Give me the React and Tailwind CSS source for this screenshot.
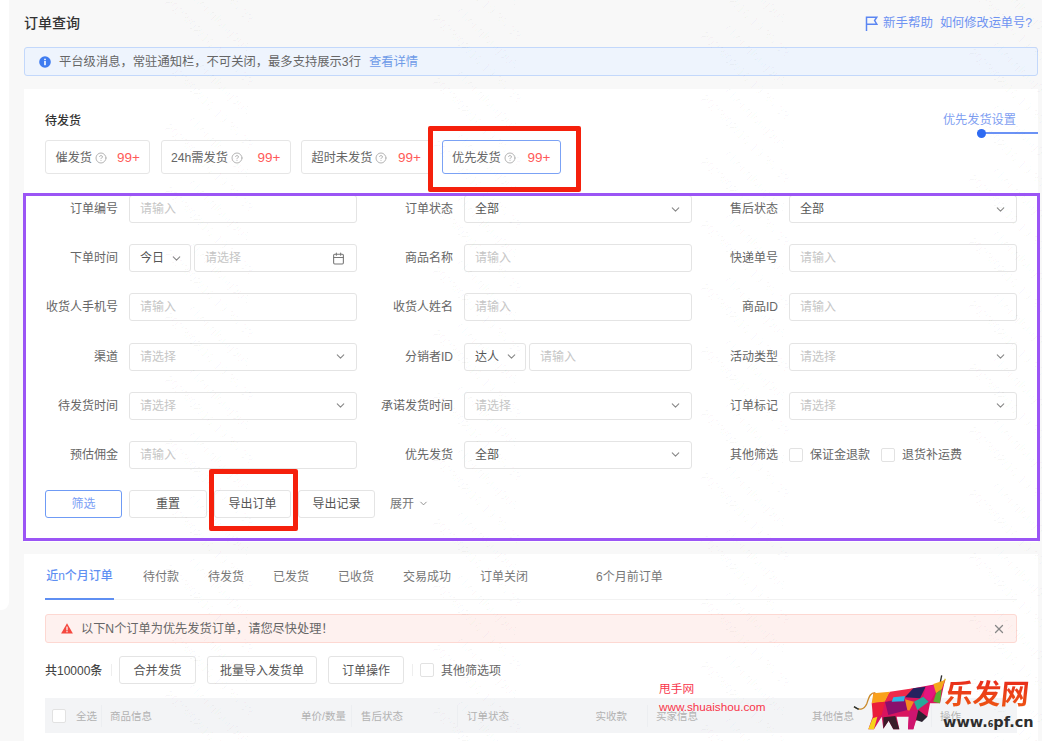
import React from 'react';
import { ChevronDown, CircleHelp, Calendar, X } from 'lucide-react';

const statusTabs = [
  { label: '催发货', width: 'w-[105px]' },
  { label: '24h需发货', width: 'w-[130px]' },
  { label: '超时未发货', width: 'w-[130px]' },
  { label: '优先发货', width: 'w-[119px]', active: true },
];

const orderTabs = ['待付款', '待发货', '已发货', '已收货', '交易成功', '订单关闭'];

const Input = ({ text = '请输入' }) => (
  <div className="flex h-[28px] w-full items-center rounded-[3px] border border-[#e4e4e4] bg-white px-[10px] text-[#c6c6c6]">
    {text}
  </div>
);

const Select = ({ text = '请选择', filled }) => (
  <div className={`flex h-[28px] w-full items-center justify-between rounded-[3px] border border-[#e4e4e4] bg-white pl-[10px] pr-[9px] ${filled ? 'text-[#555]' : 'text-[#c6c6c6]'}`}>
    <span>{text}</span>
    <ChevronDown size={13} className="text-[#888]" />
  </div>
);

const Small = ({ text }) => (
  <div className="flex h-[28px] w-[62px] shrink-0 items-center justify-between rounded-[3px] border border-[#e4e4e4] bg-white pl-[10px] pr-[7px] text-[#555]">
    <span>{text}</span>
    <ChevronDown size={13} className="text-[#888]" />
  </div>
);

const Field = ({ label, children }) => (
  <div className="flex items-center">
    <div className="w-[73px] shrink-0 whitespace-nowrap text-right text-[#666]">{label}</div>
    <div className="ml-[11px] flex w-[228px] gap-[3px]">{children}</div>
  </div>
);

const Button = ({ children, width, primary }) => (
  <div className={`flex h-[28px] ${width} items-center justify-center rounded-[3px] border pt-[1px] ${primary ? 'border-[#6f9bf5] text-[#7ba0f5]' : 'border-[#e4e4e4] text-[#555]'} bg-white`}>
    {children}
  </div>
);

const Check = () => <div className="h-[14px] w-[14px] shrink-0 rounded-[2px] border border-[#e2e2e2] bg-white" />;

const Cell = ({ width, children, className = '' }) => (
  <div className={`flex h-[22px] shrink-0 items-center border-r border-[#eceef1] ${width} ${className}`}>{children}</div>
);

const Flag = () => (
  <svg width="13" height="15" viewBox="0 0 13 15" fill="none" stroke="#5b86f2" strokeWidth="1.5">
    <path d="M1.5 15V1.2h10.3L9.6 4.6l2.2 3.6H1.5" />
  </svg>
);

const Info = () => (
  <svg width="12" height="12" viewBox="0 0 12 12">
    <circle cx="6" cy="6" r="5.8" fill="#3f7cf0" />
    <rect x="5.2" y="5" width="1.6" height="4.2" fill="#fff" />
    <rect x="5.2" y="2.7" width="1.6" height="1.5" fill="#fff" />
  </svg>
);

const Warn = () => (
  <svg width="12" height="11" viewBox="0 0 12 11">
    <path d="M6 .3 11.9 10.6H.1z" fill="#f5483f" />
    <rect x="5.4" y="3.6" width="1.2" height="3.8" fill="#fff" />
    <rect x="5.4" y="8.1" width="1.2" height="1.2" fill="#fff" />
  </svg>
);

// bull logo, coordinates follow the picture at 3x
const bull = [
  ['130,100 200,98 250,85 320,72 345,60 330,130 300,130 292,170 258,182 250,208 234,208 236,170 200,170 208,208 190,208 176,182 160,206 155,170 132,208 115,208 128,170', '#d9145f'],
  ['130,100 180,95 165,125 125,130', '#f9a11b'],
  ['125,130 165,125 155,165 130,178', '#ea1d3a'],
  ['128,175 142,170 132,208 115,208', '#f7d21a'],
  ['165,125 225,118 232,150 175,165', '#8a0f6c'],
  ['180,95 250,85 225,112 165,125', '#ee2a4a'],
  ['250,85 287,80 270,115 225,112', '#25225f'],
  ['190,112 225,108 222,124 185,125', '#2fb5e5'],
  ['225,118 252,125 238,152 232,150', '#f58a1f'],
  ['252,125 280,110 296,125 262,150', '#2aa89a'],
  ['287,80 320,75 315,100 300,125 280,110', '#e5167f'],
  ['310,72 345,60 335,88 318,100', '#f4a81c'],
  ['318,100 335,88 330,130 310,125', '#5bb031'],
  ['160,172 196,168 208,208 190,208 176,182 160,206', '#3a1c2a'],
  ['238,152 265,150 256,180 250,208 234,208', '#cf1570'],
  ['265,150 292,170 276,186 258,180', '#2b2230'],
];

const App = () => {
  const marks = [];
  for (let c = 0; c < 6; c++) {
    for (let r = -1; r < 13; r++) {
      marks.push({ left: c * 268 - 111, top: r * 63 - 5 + (c * 17) % 63 });
    }
  }

  return (
    <div className="relative flex h-[741px] w-[1042px] overflow-hidden bg-[#f8f8f8] text-[12px] leading-[20px] text-[#555] [font-family:'Liberation_Sans','Noto_Sans_CJK_SC',sans-serif]">
      <div className="h-[610px] w-[9px] shrink-0 rounded-br-lg bg-white" />

      <div className="ml-[15px] flex w-[1014px] shrink-0 flex-col">
        {/* Header */}
        <div className="flex h-[47px] shrink-0 items-center justify-between pb-[1px]">
          <h1 className="text-[14px] font-medium text-[#333]">订单查询</h1>
          <div className="-mr-[-6px] flex items-center text-[#6e93f2]">
            <Flag />
            <span className="ml-[5px] text-[12.5px]">新手帮助</span>
            <span className="ml-[7px] text-[12.2px]">如何修改运单号?</span>
          </div>
        </div>

        {/* Notice */}
        <div className="flex h-[29px] shrink-0 items-center rounded-[3px] border border-[#c3d8fb] bg-[#eef4fd] pl-[14px] text-[12.3px]">
          <Info />
          <span className="ml-[8px] text-[#666]">平台级消息，常驻通知栏，不可关闭，最多支持展示3行</span>
          <span className="ml-[8px] text-[#6e9be8]">查看详情</span>
        </div>

        {/* Filter card */}
        <div className="relative mt-[13px] shrink-0 bg-white px-[21px] pb-[24px] pt-[22px]">
          <div className="font-medium text-[#333]">待发货</div>
          <div className="mt-[9px] flex gap-[10.5px]">
            {statusTabs.map((t) => (
              <div
                key={t.label}
                className={`flex h-[34px] ${t.width} items-center rounded-[3px] border bg-white pl-[9.5px] pr-[9px] pt-[1px] ${t.active ? 'border-[#7ba2f5]' : 'border-[#e6e6e6]'}`}
              >
                <span className="whitespace-nowrap text-[12.2px] text-[#666]">{t.label}</span>
                <CircleHelp size={12} className="ml-[3px] shrink-0 text-[#b4b4b4]" />
                <span className="ml-auto text-[13.5px] text-[#ff5a58]">99+</span>
              </div>
            ))}
          </div>

          <div className="mt-[21px] grid grid-cols-[335px_325px_312px] gap-y-[21.2px]">
            <Field label="订单编号"><Input /></Field>
            <Field label="订单状态"><Select text="全部" filled /></Field>
            <Field label="售后状态"><Select text="全部" filled /></Field>

            <Field label="下单时间">
              <Small text="今日" />
              <div className="flex h-[28px] flex-1 items-center justify-between rounded-[3px] border border-[#e4e4e4] pl-[10px] pr-[11px] text-[#c6c6c6]">
                <span>请选择</span>
                <Calendar size={13} className="text-[#777]" />
              </div>
            </Field>
            <Field label="商品名称"><Input /></Field>
            <Field label="快递单号"><Input /></Field>

            <Field label="收货人手机号"><Input /></Field>
            <Field label="收货人姓名"><Input /></Field>
            <Field label="商品ID"><Input /></Field>

            <Field label="渠道"><Select /></Field>
            <Field label="分销者ID">
              <Small text="达人" />
              <Input />
            </Field>
            <Field label="活动类型"><Select /></Field>

            <Field label="待发货时间"><Select /></Field>
            <Field label="承诺发货时间"><Select /></Field>
            <Field label="订单标记"><Select /></Field>

            <Field label="预估佣金"><Input /></Field>
            <Field label="优先发货"><Select text="全部" filled /></Field>
            <Field label="其他筛选">
              <div className="flex h-[28px] items-center whitespace-nowrap text-[#666]">
                <Check />
                <span className="ml-[7px]">保证金退款</span>
                <span className="ml-[11px]"><Check /></span>
                <span className="ml-[7px]">退货补运费</span>
              </div>
            </Field>
          </div>

          <div className="mt-[21px] flex items-center">
            <Button width="w-[77px]" primary>筛选</Button>
            <div className="ml-[7px]"><Button width="w-[78px]">重置</Button></div>
            <div className="ml-[7px]"><Button width="w-[77px]">导出订单</Button></div>
            <div className="ml-[7px]"><Button width="w-[77px]">导出记录</Button></div>
            <span className="ml-[15px] text-[#777]">展开</span>
            <ChevronDown size={11} className="ml-[4px] text-[#888]" />
          </div>

          {/* Priority setting tip */}
          <div className="absolute right-[22px] top-[21px] text-[12.2px] text-[#7f9ff2]">优先发货设置</div>
          <div className="absolute left-[953px] right-0 top-[43px] h-[2px] bg-[#6b92f5]" />
          <div className="absolute left-[953px] top-[40px] h-[9px] w-[9px] rounded-full bg-[#2f6bf2]" />
        </div>

        {/* Orders card */}
        <div className="mt-[12px] flex-1 bg-white px-[21px]">
          <div className="flex h-[46px] items-stretch gap-[29px] border-b border-[#f2f2f2]">
            <div className="-mb-px flex w-[69px] items-center justify-center border-b-2 border-[#5f8ff2] pt-[1px] font-medium text-[#5f8ff2]">近n个月订单</div>
            {orderTabs.map((t) => (
              <div key={t} className="flex items-center pt-[1px] text-[#777]">{t}</div>
            ))}
            <div className="ml-[39px] flex items-center pt-[1px] text-[#777]">6个月前订单</div>
          </div>

          <div className="mt-[14px] flex h-[29px] items-center rounded-[3px] border border-[#fdd8d2] bg-[#fef1ef] pl-[15px] pr-[10px] pt-[1px] text-[12.2px]">
            <Warn />
            <span className="ml-[8px] text-[#666]">以下N个订单为优先发货订单，请您尽快处理！</span>
            <X size={14} strokeWidth={2.2} className="ml-auto text-[#888]" />
          </div>

          <div className="mt-[14px] flex h-[27px] items-center">
            <span className="w-[58px] pt-[1px] font-medium text-[#444]">共10000条</span>
            <div className="ml-[8px] h-[12px] w-px bg-[#eee]" />
            <div className="ml-[7px]"><Button width="w-[77px]">合并发货</Button></div>
            <div className="ml-[11px]"><Button width="w-[110px]">批量导入发货单</Button></div>
            <div className="ml-[11px]"><Button width="w-[76px]">订单操作</Button></div>
            <div className="ml-[8px] h-[12px] w-px bg-[#eee]" />
            <div className="ml-[7px]"><Check /></div>
            <span className="ml-[7px] pt-[1px] text-[#666]">其他筛选项</span>
          </div>

          <div className="mt-[14px] flex h-[35px] items-center bg-[#f3f4f6] pt-[1px] text-[10.5px] text-[#b2b2b2]">
            <Cell width="w-[57px]" className="pl-[7px]">
              <Check />
              <span className="ml-[10px]">全选</span>
            </Cell>
            <Cell width="w-[250px]" className="justify-between pl-[8px] pr-[5px]">
              <span>商品信息</span>
              <span>单价/数量</span>
            </Cell>
            <Cell width="w-[106px]" className="pl-[9px]">售后状态</Cell>
            <Cell width="w-[190px]" className="justify-between pl-[9px] pr-[20px]">
              <span>订单状态</span>
              <span>实收款</span>
            </Cell>
            <Cell width="w-[156px]" className="border-r-0 pl-[8px]">买家信息</Cell>
            <Cell width="w-[128px]" className="pl-[8px]">其他信息</Cell>
            <div className="pl-[8px]">操作</div>
          </div>
        </div>
      </div>

      {/* Faint page watermark */}
      <div className="pointer-events-none absolute inset-0 overflow-hidden text-[13px] leading-[22px] text-black/[0.03]">
        {marks.map((m, i) => (
          <div key={i} className="absolute rotate-45 whitespace-nowrap" style={{ left: m.left, top: m.top }}>
            <div className="pl-[12px]">chenglong905</div>
            <div>2023/02/16 19:35:33</div>
          </div>
        ))}
      </div>

      {/* Annotation frames */}
      <div className="pointer-events-none absolute left-[23px] top-[193px] h-[348px] w-[1017px] border-[3px] border-[#9b55f5]" />
      <div className="pointer-events-none absolute left-[428px] top-[126px] h-[66px] w-[153px] rounded-[2px] border-[5px] border-[#f5200c]" />
      <div className="pointer-events-none absolute left-[209px] top-[469px] h-[62px] w-[89px] rounded-[2px] border-[5px] border-[#f5200c]" />

      {/* Site stamps */}
      <div className="pointer-events-none absolute left-[659px] top-[680px] text-[11.7px] leading-[18px] text-[#f8344a]">
        <div>甩手网</div>
        <div className="whitespace-nowrap">www.shuaishou.com</div>
      </div>
      <svg className="pointer-events-none absolute left-[830px] top-[660px]" width="212" height="81" viewBox="0 0 636 243">
        <path d="M72 140c14 12 30 10 38-8 6-16 8-34 26-34" fill="none" stroke="#c98a2a" strokeWidth="4" />
        <path d="M72 140l14 8" stroke="#22303a" strokeWidth="4" />
        <path d="M335 46l-5 26" stroke="#2a2a2a" strokeWidth="4" />
        <path d="M346 56l-10 26" stroke="#d9c020" strokeWidth="4" />
        {bull.map(([points, fill]) => (
          <polygon key={points} points={points} fill={fill} />
        ))}
      </svg>
      <div className="pointer-events-none absolute left-[945px] top-[677px] -skew-x-6 whitespace-nowrap bg-gradient-to-b from-[#e8241c] to-[#ee5a10] bg-clip-text text-[28px] font-bold leading-[36px] text-transparent">
        乐发网
      </div>
      <div className="pointer-events-none absolute left-[943px] top-[712px] whitespace-nowrap text-[14.5px] font-bold leading-[20px] text-[#2e2e2e] [font-family:'DejaVu_Sans',sans-serif]">
        www.<span className="text-[8px]">6</span>pf.cn
      </div>
    </div>
  );
};

export default App;
